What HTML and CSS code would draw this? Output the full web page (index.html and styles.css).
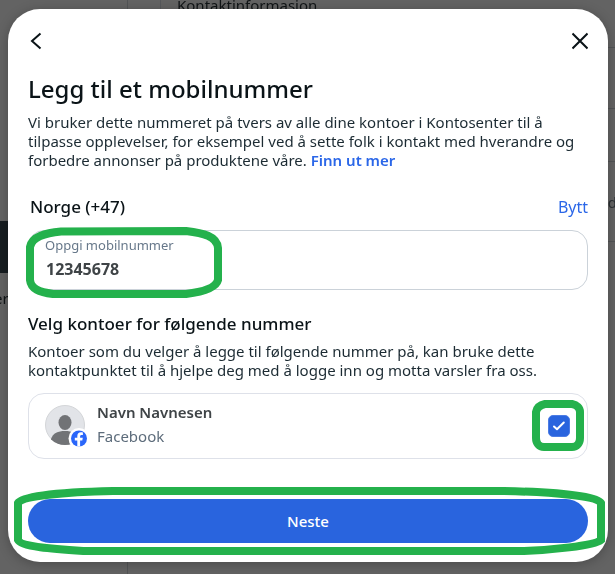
FILE: index.html
```html
<!DOCTYPE html>
<html lang="no">
<head>
    <meta charset="UTF-8">
    <meta name="viewport" content="width=device-width, initial-scale=1.0">
    <title>Legg til et mobilnummer</title>
    <link rel="stylesheet" href="styles.css">
</head>
<body>
<!-- dimmed page behind the dialog -->
<div class="page" aria-hidden="true">
    <div class="page-nav"></div>
    <div class="page-gutter"></div>
    <div class="page-title">Kontaktinformasjon</div>
    <div class="page-block"></div>
    <div class="page-word page-word-left">er</div>
    <div class="page-word page-word-right">d</div>
    <div class="page-rule rule-1"></div>
    <div class="page-rule rule-2"></div>
    <div class="page-rule rule-3"></div>
    <div class="page-rule rule-4"></div>
</div>

<form class="dialog" role="dialog" aria-labelledby="dialog-title">
    <div class="dialog-header">
        <button type="button" class="icon-button" aria-label="Tilbake">
            <svg width="16" height="20" viewBox="0 0 16 20"><path d="M12.5 2.5 4 10l8.500 7.500"/></svg>
        </button>
        <button type="button" class="icon-button" aria-label="Lukk">
            <svg width="16" height="20" viewBox="0 0 16 20"><path d="M.5 2.500 15.500 17.500M15.500 2.500.5 17.500"/></svg>
        </button>
    </div>

    <h1 class="title" id="dialog-title">Legg til et mobilnummer</h1>
    <p class="text">Vi bruker dette nummeret på tvers av alle dine kontoer i Kontosenter til å tilpasse opplevelser, for eksempel ved å sette folk i kontakt med hverandre og forbedre annonser på produktene våre. <a href="#" class="more">Finn ut mer</a></p>

    <div class="country">
        <span class="country-name">Norge (+47)</span>
        <a href="#" class="change">Bytt</a>
    </div>

    <div class="field">
        <label class="field-label" for="phone">Oppgi mobilnummer</label>
        <input class="field-input" type="tel" id="phone" value="12345678">
        <svg class="mark mark-field" viewBox="0 0 196 71" aria-hidden="true"><path d="M35 4.500 160 4C177 6 191 9 192 21V53C190 61 176 65 160 67H27C13 65 5 62 4 53V20C6 9 20 6 35 4.500Z"/></svg>
    </div>

    <h2 class="subtitle">Velg kontoer for følgende nummer</h2>
    <p class="text">Kontoer som du velger å legge til følgende nummer på, kan bruke dette kontaktpunktet til å hjelpe deg med å logge inn og motta varsler fra oss.</p>

    <div class="account">
        <svg class="avatar" width="44" height="42" viewBox="0 0 44 42" aria-hidden="true">
            <clipPath id="round"><circle cx="20" cy="20" r="20"/></clipPath>
            <circle cx="20" cy="20" r="19.500" fill="#e2e4e8" stroke="#d3d5d8"/>
            <g clip-path="url(#round)" fill="#717376">
                <ellipse cx="20" cy="17.500" rx="6.500" ry="7.500"/>
                <path d="M6 40V34C8 28 13 26 20 26s12 2 14 8v6z"/>
            </g>
            <circle cx="34" cy="33.500" r="10.500" fill="#fff"/>
            <circle cx="34" cy="33.500" r="8" fill="#2a66fa"/>
            <path d="M32.300 41.500V35.500H29.800V32.700H32.300V31.300C32.300 28.500 33.700 27.200 36 27.200c.7 0 1.300.1 1.900.2v2.500h-1.300c-1 0-1.500.5-1.500 1.500v1.300h2.700l-.5 2.800h-2.200v6z" fill="#fff"/>
        </svg>
        <label class="account-info" for="account-check">
            <span class="account-name">Navn Navnesen</span>
            <span class="account-type">Facebook</span>
        </label>
        <div class="check-wrap">
            <input class="check" type="checkbox" id="account-check" checked>
            <svg class="check-icon" width="22" height="22" viewBox="0 0 22 22" aria-hidden="true"><path d="M6 11.500 9 14.300 15.800 7.500"/></svg>
            <svg class="mark mark-check" viewBox="0 0 52 51" aria-hidden="true"><path d="M13 4H40C45 5 48 8 48 12V38C48 43 45 47 40 47H12C7 47 4 43 4 38V12C5 7 8 5 13 4Z"/></svg>
        </div>
    </div>

    <div class="actions">
        <button type="submit" class="next">Neste</button>
        <svg class="mark mark-next" viewBox="0 0 591 68" preserveAspectRatio="none" aria-hidden="true"><path d="M99 4H490C540 5 583 9 587 16V53C580 59 535 63 510 64H71C40 62 7 60 4 53V16C8 9 50 5 99 4Z"/></svg>
    </div>
</form>
</body>
</html>
```

FILE: styles.css
```css
* {
  box-sizing: border-box;
}

body {
  margin: 0;
  padding: 9px 7px 12px 8px;
  background: #636363;
  color: #1c2b33;
  font-family: "Noto Sans", sans-serif;
  font-size: 15px;
  line-height: 19px;
}

h1,
h2,
p {
  margin: 0;
}

a {
  color: #2b67e8;
  text-decoration: none;
}

/* page behind the dialog */
.page {
  position: fixed;
  inset: 0;
  overflow: hidden;
  color: #101416;
}

.page > div {
  position: absolute;
}

.page-nav {
  top: 0;
  bottom: 0;
  left: 127px;
  border-left: 1px solid #525456;
}

.page-gutter {
  top: 0;
  left: 160px;
  height: 60px;
  border-left: 1px solid #56585b;
}

.page-title {
  top: -4px;
  left: 177px;
}

.page-block {
  top: 221px;
  left: 0;
  width: 40px;
  height: 52px;
  background: #171d21;
}

.page-word-left {
  top: 289px;
  left: -6px;
}

.page-word-right {
  top: 193px;
  right: -2px;
  color: #2a2f33;
}

.page-rule {
  right: 0;
  width: 40px;
  border-top: 1px solid #525456;
}

.rule-1 {
  top: 47px;
}

.rule-2 {
  top: 108px;
}

.rule-3 {
  top: 161px;
}

.rule-4 {
  top: 241px;
}

/* dialog */
.dialog {
  position: relative;
  padding: 0 20px 19px;
  border-radius: 32px;
  background: #fff;
  box-shadow: 0 2px 12px rgba(0, 0, 0, 0.25);
}

.dialog-header {
  display: flex;
  justify-content: space-between;
  align-items: center;
  height: 64px;
}

.icon-button {
  display: flex;
  padding: 0;
  border: 0;
  background: none;
}

.icon-button svg {
  fill: none;
  stroke: #0a1317;
  stroke-width: 2;
}

.title {
  margin-bottom: 8px;
  color: #0a1317;
  font-size: 24px;
  font-weight: 500;
  line-height: 32px;
}

.more {
  font-weight: 600;
}

.country {
  display: flex;
  justify-content: space-between;
  margin: 25px 0 11px;
  padding-left: 2px;
  line-height: 24px;
}

.country-name,
.subtitle {
  color: #0a1317;
  font-size: 17px;
  font-weight: 500;
  line-height: 24px;
}

.change {
  font-size: 16px;
}

.field {
  position: relative;
  display: flex;
  flex-direction: column;
  height: 60px;
  padding: 5px 16px;
  border: 1px solid #cbd2d9;
  border-radius: 16px;
}

.field-label {
  color: #67788a;
  font-size: 13px;
  line-height: 18px;
}

.field-input {
  width: 100%;
  height: 32px;
  padding: 0 1px;
  border: 0;
  outline: 0;
  background: none;
  color: #3f4447;
  font-family: inherit;
  font-size: 16px;
  font-weight: 700;
}

.subtitle {
  margin: 22px 0 6px;
}

/* account row */
.account {
  display: flex;
  align-items: center;
  gap: 8px;
  height: 66px;
  margin-top: 13px;
  padding: 0 17px 0 16px;
  border: 1px solid #dee1e9;
  border-radius: 16px;
}

.account-info {
  flex: 1;
  display: flex;
  flex-direction: column;
  padding-bottom: 4px;
  line-height: 24px;
}

.account-name {
  color: #3f4447;
  font-weight: 600;
}

.account-type {
  color: #5d6c7b;
}

.check-wrap {
  position: relative;
  width: 22px;
  height: 22px;
}

.check {
  appearance: none;
  width: 22px;
  height: 22px;
  margin: 0;
  border: 1px solid #4c7ce4;
  border-radius: 5px;
  background: #2964de;
}

.check-icon {
  position: absolute;
  top: 0;
  left: 0;
  fill: none;
  stroke: #fff;
  stroke-width: 2;
  stroke-linecap: round;
  stroke-linejoin: round;
  pointer-events: none;
}

.actions {
  position: relative;
  margin-top: 40px;
}

.next {
  display: block;
  width: 100%;
  height: 44px;
  border: 0;
  border-radius: 22px;
  background: #2964de;
  color: #fff;
  font-family: inherit;
  font-size: 15px;
  font-weight: 500;
}

/* green marker outlines */
.mark {
  position: absolute;
  fill: none;
  stroke: #24b14c;
  stroke-width: 8;
  pointer-events: none;
}

.mark path {
  vector-effect: non-scaling-stroke;
}

.mark-field {
  top: -4px;
  left: -3px;
  width: 196px;
  height: 71px;
}

.mark-check {
  top: -15px;
  left: -16px;
  width: 52px;
  height: 51px;
}

.mark-next {
  top: -12px;
  left: -14px;
  width: calc(100% + 31px);
  height: 68px;
}
```
